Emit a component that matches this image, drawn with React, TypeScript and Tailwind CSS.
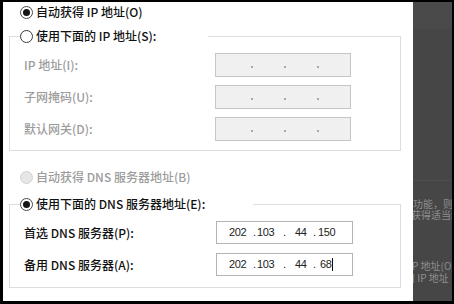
import React from "react";

function Radio({ kind }: { kind: "on" | "off" | "dis" }) {
  if (kind === "on")
    return (
      <div className="w-[13px] h-[13px] rounded-full border border-[#4a4a4a] bg-white flex items-center justify-center shrink-0">
        <div className="w-[7px] h-[7px] rounded-full bg-[#151515]" />
      </div>
    );
  if (kind === "off")
    return <div className="w-[13px] h-[13px] rounded-full border border-[#3a3a3a] bg-white shrink-0" />;
  return <div className="w-[13px] h-[13px] rounded-full border border-[#d2d2d2] bg-[#e6e6e6] shrink-0" />;
}

function GrayIp() {
  return (
    <div className="w-[136px] h-[24px] border border-[#c6c6c6] bg-[#f0f0f0] flex items-center">
      <div className="w-[2px] h-[2px] bg-[#a9a9a9] ml-[35px] mt-[3px]" />
      <div className="w-[2px] h-[2px] bg-[#a9a9a9] ml-[31px] mt-[3px]" />
      <div className="w-[2px] h-[2px] bg-[#a9a9a9] ml-[31px] mt-[3px]" />
    </div>
  );
}

function DnsIp({ last, lastPad, caret }: { last: string; lastPad: string; caret?: boolean }) {
  return (
    <div className="w-[137px] h-[23px] border border-[#b3b3b3] bg-white flex items-center text-[11px] leading-[13px] text-[#222222] [font-family:'Liberation_Sans',Arial,sans-serif] tracking-[-0.4px]">
      <span className="w-[24px] ml-[12px]">202</span>
      <span className="w-[4px]">.</span>
      <span className="w-[26px]">103</span>
      <span className="w-[4px]">.</span>
      <span className="w-[26px] pl-[8px]">44</span>
      <span className="w-[4px]">.</span>
      <span className={lastPad + " flex items-center"}>
        {last}
        {caret && <span className="w-[1px] h-[13px] bg-[#111] ml-[1px]" />}
      </span>
    </div>
  );
}

export default function App() {
  const dark = "text-[#111111]";
  const dis = "text-[#9c9c9c]";
  return (
    <div className="w-[454px] h-[304px] bg-black pt-[2px] pl-[3px] pr-[2px] pb-[3px] flex overflow-hidden [font-family:'Noto_Sans_CJK_SC','Noto_Sans',sans-serif] text-[12px] leading-4 font-medium">
      <div className="w-[410px] h-full bg-white flex flex-col">
        <div className={"flex items-center h-4 mt-[2px] ml-[17px] gap-[3px] " + dark}>
          <Radio kind="on" />
          <span>自动获得 IP 地址(O)</span>
        </div>

        <fieldset className="ml-[6px] w-[392px] mt-[8px] border border-[#dddddd] pl-[14px] pt-[9px] pb-[9px]">
          <legend className={"ml-[-4px] w-[188px] h-4 flex items-center gap-[3px] " + dark}>
            <Radio kind="off" />
            <span>使用下面的 IP 地址(S):</span>
          </legend>
          <div className="flex flex-col gap-[8px]">
            <div className="flex items-center h-[24px]">
              <span className={"w-[191px] " + dis}>IP 地址(I):</span>
              <GrayIp />
            </div>
            <div className="flex items-center h-[24px]">
              <span className={"w-[191px] " + dis}>子网掩码(U):</span>
              <GrayIp />
            </div>
            <div className="flex items-center h-[24px]">
              <span className={"w-[191px] " + dis}>默认网关(D):</span>
              <GrayIp />
            </div>
          </div>
        </fieldset>

        <div className={"flex items-center h-4 mt-[18px] ml-[17px] gap-[3px] " + dis}>
          <Radio kind="dis" />
          <span>自动获得 DNS 服务器地址(B)</span>
        </div>

        <fieldset className="ml-[6px] w-[392px] mt-[11px] border border-[#dddddd] pl-[14px] pt-[9px] pb-[11px]">
          <legend className={"ml-[-4px] w-[233px] h-4 flex items-center gap-[3px] " + dark}>
            <Radio kind="on" />
            <span>使用下面的 DNS 服务器地址(E):</span>
          </legend>
          <div className="flex flex-col gap-[9px]">
            <div className="flex items-center h-[23px]">
              <span className={"w-[192px] " + dark}>首选 DNS 服务器(P):</span>
              <DnsIp last="150" lastPad="pl-[1px]" />
            </div>
            <div className="flex items-center h-[23px]">
              <span className={"w-[192px] " + dark}>备用 DNS 服务器(A):</span>
              <DnsIp last="68" lastPad="pl-[3px]" caret />
            </div>
          </div>
        </fieldset>
      </div>

      <div className="flex-1 h-full bg-[#464646] flex flex-col overflow-hidden text-[10px] leading-[11px] font-normal text-[#8e8e8e] whitespace-nowrap">
        <div className="h-[27px] bg-[#4a4a4a] shrink-0" />
        <div className="h-[151px] shrink-0" />
        <div className="h-[1px] bg-[#4e4e4e] shrink-0" />
        <div className="mt-[17px]">功能，则可以</div>
        <div className="ml-[-2px]">获得适当的</div>
        <div className="mt-[40px] ml-[-4px]">IP 地址(O)</div>
        <div className="mt-[1px] ml-[-8px]">用 IP 地址</div>
      </div>
    </div>
  );
}
